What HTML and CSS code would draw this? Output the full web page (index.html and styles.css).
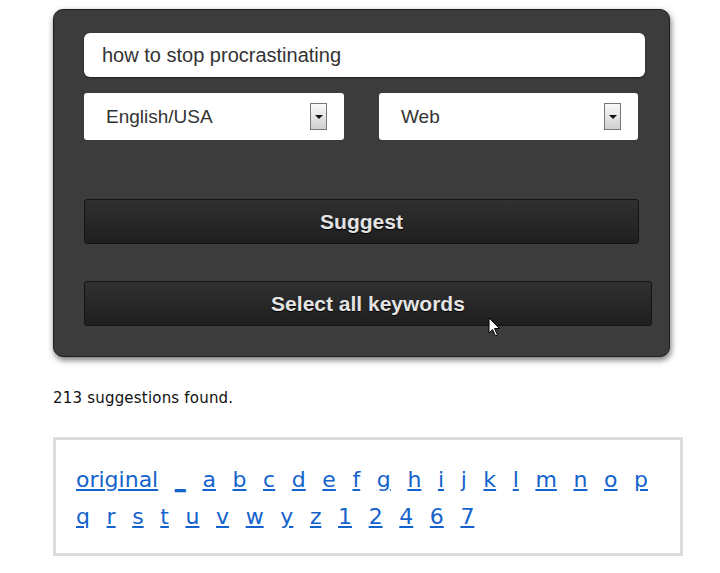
FILE: index.html
```html
<!DOCTYPE html>
<html lang="en">
<head>
  <meta charset="UTF-8" />
  <title>Keyword Suggest</title>
  <link rel="stylesheet" href="styles.css">
</head>
<body>

<div class="page">
  <div class="card">
    <div class="query">how to stop procrastinating</div>

    <div class="selects">
      <div class="select">
        <span>English/USA</span>
        <span class="arrow"></span>
      </div>
      <div class="select">
        <span>Web</span>
        <span class="arrow"></span>
      </div>
    </div>

    <button class="btn btn-suggest">Suggest</button>
    <div class="btn-wrap">
      <button class="btn btn-all">Select all keywords</button>
      <!-- mouse pointer over the button -->
      <svg class="pointer" width="13" height="20" viewBox="0 0 13 20">
        <path d="M1 1 L1 16 L4.5 12.5 L7.5 19 L9.5 18 L6.5 11.5 L11.5 11.5 Z" fill="#fff" stroke="#000" stroke-width="1" stroke-linejoin="round"/>
      </svg>
    </div>
  </div>

  <p class="count">213 suggestions found.</p>

  <div class="letters">
    <a href="#">original</a><a href="#">_</a><a href="#">a</a><a href="#">b</a><a href="#">c</a>
    <a href="#">d</a><a href="#">e</a><a href="#">f</a><a href="#">g</a><a href="#">h</a>
    <a href="#">i</a><a href="#">j</a><a href="#">k</a><a href="#">l</a><a href="#">m</a>
    <a href="#">n</a><a href="#">o</a><a href="#">p</a><a href="#">q</a><a href="#">r</a>
    <a href="#">s</a><a href="#">t</a><a href="#">u</a><a href="#">v</a><a href="#">w</a>
    <a href="#">y</a><a href="#">z</a><a href="#">1</a><a href="#">2</a><a href="#">4</a>
    <a href="#">6</a><a href="#">7</a>
  </div>
</div>

</body>
</html>
```

FILE: styles.css
```css
:root {
  --card: #3c3c3c; --btn-top: #303030; --btn-bot: #1f1f1f;
  --btn-text: #e4e4e4; --link: #1463cc; --field-text: #333;
}
body {
  margin: 0; background: #fff;
  font-family: "DejaVu Sans", sans-serif;
}
.page { padding: 9px 0 0 53px; }

.card {
  width: 617px; box-sizing: border-box;
  background: var(--card); border: 1px solid #1e1e1e; border-radius: 10px;
  padding: 23px 0 30px 30px;
  box-shadow: 1px 3px 6px rgba(0, 0, 0, 0.55);
}
.query {
  width: 561px; height: 44px; box-sizing: border-box;
  background: #fff; border-radius: 6px; padding: 0 18px;
  display: flex; align-items: center;
  font: 20px "Liberation Sans", Arial, sans-serif; color: var(--field-text);
  box-shadow: 0 1px 2px rgba(0, 0, 0, 0.5);
}
.selects { display: flex; gap: 35px; margin-top: 16px; }
.select {
  width: 260px; height: 47px; box-sizing: border-box;
  background: #fff; border-radius: 3px; padding: 0 17px 0 22px;
  display: flex; align-items: center; justify-content: space-between;
  font: 19px "Liberation Sans", Arial, sans-serif; color: var(--field-text);
}
.select + .select { width: 259px; }
.arrow {
  width: 17px; height: 27px; box-sizing: border-box;
  border: 1px solid #777; background: linear-gradient(#fafafa, #cfcfcf);
  position: relative;
}
.arrow::after {
  content: ""; position: absolute; left: 4px; top: 11px;
  border-left: 4px solid transparent; border-right: 4px solid transparent;
  border-top: 4px solid #111;
}

.btn {
  display: block; height: 45px; box-sizing: border-box;
  background: linear-gradient(var(--btn-top), var(--btn-bot));
  border: 1px solid #141414; border-radius: 3px;
  color: var(--btn-text); font: bold 21px "Liberation Sans", Arial, sans-serif;
  text-shadow: 0 1px 1px #000; cursor: pointer; padding: 0;
}
.btn-suggest { width: 555px; margin-top: 59px; }
.btn-wrap { position: relative; margin-top: 37px; }
.btn-all { width: 568px; }
.pointer { position: absolute; left: 404px; top: 36px; }

.count {
  margin: 32px 0 0; font-size: 15px; line-height: 18px; color: #111;
  letter-spacing: 0.2px;
}

.letters {
  width: 630px; box-sizing: border-box; margin-top: 30px;
  border: 3px solid #dcdcdc; padding: 21px 20px 18px;
  display: flex; flex-wrap: wrap; column-gap: 16.6px;
  font-size: 22px; line-height: 37px;
}
.letters a { color: var(--link); }
```
